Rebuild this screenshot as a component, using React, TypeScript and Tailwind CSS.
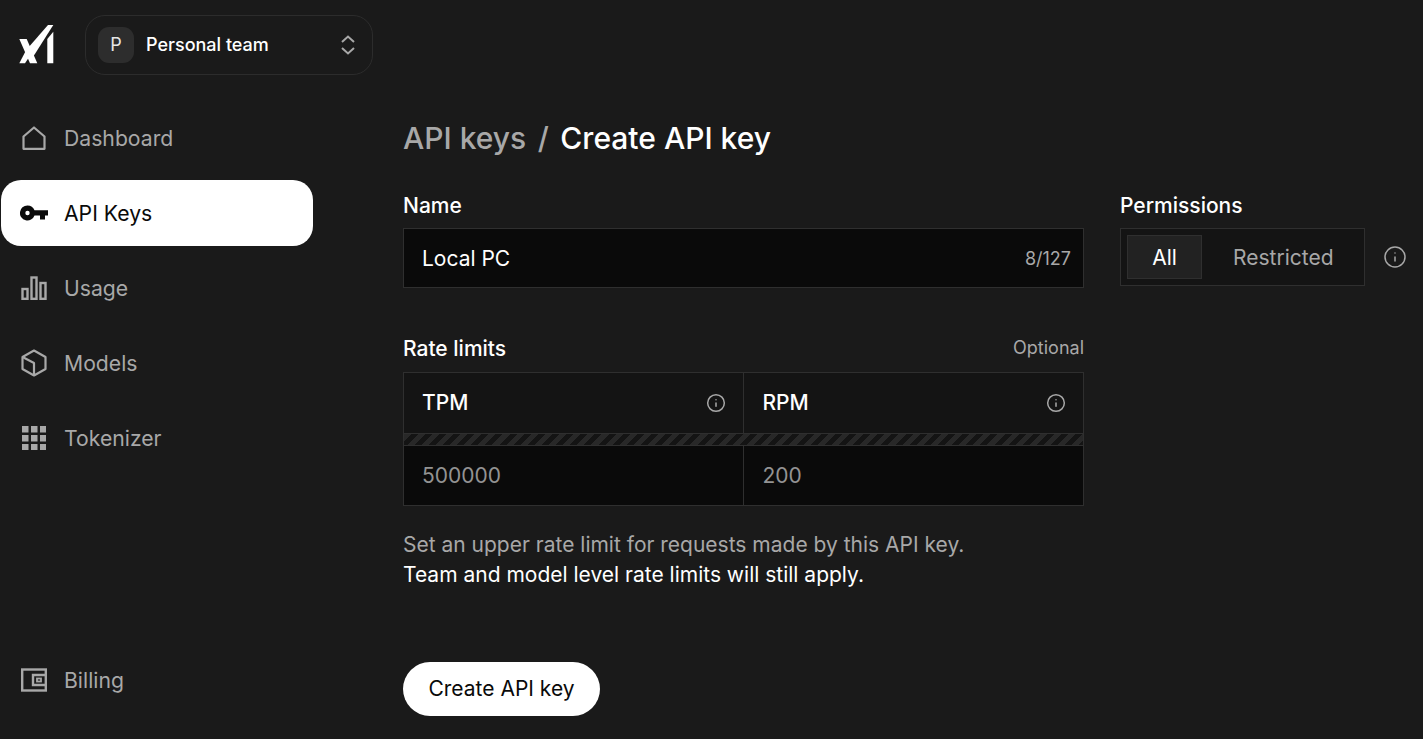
import { Info } from "lucide-react";

const Logo = () => (
  <svg viewBox="0 0 36 40" className="w-[36px] h-[40px]" fill="#fff">
    <path d="M35.300 0 L30 0 L9.500 23.500 L15 32 Z" />
    <path d="M29.300 14 L35.300 6.700 V38.300 H29.300 Z" />
    <path d="M1.300 14 H8.700 L19.300 38.300 H12 Z" />
    <path d="M1.300 38.300 L7.700 26 L11.500 31.500 L7 38.300 Z" />
  </svg>
);

const HomeIcon = () => (
  <svg viewBox="0 0 24 24" className="w-[24px] h-[24px]" fill="none" stroke="currentColor" strokeWidth="2.200">
    <path d="M1.500 10.500 L12 1.500 L22.500 10.500 V22.800 H1.500 Z" strokeLinejoin="round" />
  </svg>
);

const KeyIcon = () => (
  <svg viewBox="0 0 28 16" className="w-[28px] h-[16px]" fill="currentColor">
    <path
      fillRule="evenodd"
      d="M7.500 0.500a7.500 7.500 0 0 1 7 4.800H28v5.200h-3v4h-5v-4h-5.500a7.500 7.500 0 1 1-7-10zm0 5.300a2.200 2.200 0 1 0 0 4.400a2.200 2.200 0 0 0 0-4.400z"
    />
  </svg>
);

const UsageIcon = () => (
  <svg viewBox="0 0 26 24" className="w-[26px] h-[24px]" fill="none" stroke="currentColor" strokeWidth="2.400">
    <rect x="1.500" y="13" width="5" height="9.800" />
    <rect x="10.500" y="1.500" width="5" height="21.300" />
    <rect x="19.500" y="7" width="5" height="15.800" />
  </svg>
);

const ModelsIcon = () => (
  <svg viewBox="0 0 26 28" className="w-[26px] h-[28px]" fill="none" stroke="currentColor" strokeWidth="2.200" strokeLinejoin="round">
    <path d="M13 1.500 L24.500 8 V20 L13 26.500 L1.500 20 V8 Z" />
    <path d="M1.500 8 L13 14 V26.500" />
  </svg>
);

const GridIcon = () => (
  <svg viewBox="0 0 24 24" className="w-[24px] h-[24px]" fill="currentColor">
    {[0, 9, 18].map((y) =>
      [0, 9, 18].map((x) => <rect key={`${x}-${y}`} x={x} y={y} width="6.500" height="6.500" />)
    )}
  </svg>
);

const WalletIcon = () => (
  <svg viewBox="0 0 26 24" className="w-[26px] h-[24px]" fill="none" stroke="currentColor" strokeWidth="2.400">
    <rect x="1.200" y="1.500" width="23.600" height="21" />
    <path d="M25 7 H12 V17 H25" />
    <rect x="16" y="10.500" width="4" height="3" strokeWidth="1.800" />
  </svg>
);

const UpDownIcon = () => (
  <svg viewBox="0 0 14 20" className="w-[14px] h-[20px]" fill="none" stroke="#a8a8a8" strokeWidth="2">
    <path d="M1 7 L7 1.500 L13 7 M1 13 L7 18.500 L13 13" />
  </svg>
);

const navItems = [
  { label: "Dashboard", icon: <HomeIcon /> },
  { label: "API Keys", icon: <KeyIcon />, active: true },
  { label: "Usage", icon: <UsageIcon /> },
  { label: "Models", icon: <ModelsIcon /> },
  { label: "Tokenizer", icon: <GridIcon /> },
];

const NavItem = ({ label, icon, active }: { label: string; icon: React.ReactNode; active?: boolean }) => (
  <div
    className={`flex items-center h-[66px] w-[312px] ml-px rounded-[20px] pl-[19px] ${
      active ? "bg-white text-[#0a0a0a]" : "text-[#a8a8a8]"
    }`}
  >
    <span className="w-[28px] flex justify-center">{icon}</span>
    <span className="ml-[16px] text-[21.200px] leading-none pt-[2px]">{label}</span>
  </div>
);

const App = () => {
  return (
    <div className="flex h-screen overflow-hidden bg-[#1a1a1a] text-white font-['Inter',sans-serif]">
      {/* Sidebar */}
      <aside className="w-[403px] shrink-0 flex flex-col pb-[26px]">
        <div className="flex items-center pt-[15px] pl-[18px]">
          <Logo />
          <div className="ml-[31px] flex items-center w-[288px] h-[60px] rounded-[20px] border border-[#2c2c2c] pl-[12px] pr-[17px]">
            <span className="w-[36px] h-[36px] rounded-[11px] bg-[#2d2d2d] flex items-center justify-center text-[18px] text-[#e5e5e5] pb-[2px]">
              P
            </span>
            <span className="ml-[12px] text-[18px] font-medium flex-1 pb-[2px]">Personal team</span>
            <UpDownIcon />
          </div>
        </div>

        <nav className="mt-[30px] flex flex-col gap-[9px]">
          {navItems.map((item) => (
            <NavItem key={item.label} {...item} />
          ))}
        </nav>

        <div className="mt-auto">
          <NavItem label="Billing" icon={<WalletIcon />} />
        </div>
      </aside>

      {/* Main */}
      <main className="flex-1 pt-[120px]">
        <h1 className="text-[30px] leading-[36px] font-medium flex gap-[11.500px]">
          <span className="text-[#a8a8a8]">API keys</span>
          <span className="text-[#a8a8a8]">/</span>
          <span>Create API key</span>
        </h1>

        <div className="flex mt-[37px] gap-[36px]">
          <div className="w-[681px]">
            <label className="block text-[21px] leading-[26px] font-medium">Name</label>
            <div className="mt-[9px] h-[60px] flex items-center justify-between border border-[#2f2f2f] bg-[#0a0a0a] pl-[18px] pr-[12px]">
              <span className="text-[21px] pt-[2px]">Local PC</span>
              <span className="text-[18px] text-[#a8a8a8]">8/127</span>
            </div>

            <div className="mt-[48px] flex items-end justify-between">
              <label className="text-[21px] leading-[26px] font-medium">Rate limits</label>
              <span className="text-[18px] leading-[24px] pb-[2px] text-[#a8a8a8]">Optional</span>
            </div>

            <div className="mt-[10px] border border-[#2f2f2f]">
              <div className="grid grid-cols-2 h-[60px]">
                <div className="flex items-center justify-between pl-[18px] pr-[17px] border-r border-[#2f2f2f] bg-[#141414]">
                  <span className="text-[21px] font-medium">TPM</span>
                  <Info className="w-[20px] h-[20px] text-[#a8a8a8]" strokeWidth={1.800} />
                </div>
                <div className="flex items-center justify-between pl-[19px] pr-[17px] bg-[#141414]">
                  <span className="text-[21px] font-medium">RPM</span>
                  <Info className="w-[20px] h-[20px] text-[#a8a8a8]" strokeWidth={1.800} />
                </div>
              </div>
              <div className="h-[13px] border-y border-[#2f2f2f] bg-[repeating-linear-gradient(135deg,#282828_0px,#282828_5px,#141414_5px,#141414_10px)]" />
              <div className="grid grid-cols-2 h-[59px] bg-[#0a0a0a] text-[21px] text-[#939393]">
                <div className="flex items-center pl-[18px] border-r border-[#2f2f2f]">500000</div>
                <div className="flex items-center pl-[19px]">200</div>
              </div>
            </div>

            <p className="mt-[24px] text-[21px] leading-[30px] text-[#a8a8a8]">
              Set an upper rate limit for requests made by this API key.
              <br />
              <span className="text-white">Team and model level rate limits will still apply.</span>
            </p>

            <button className="mt-[72px] w-[197px] h-[54px] rounded-full bg-white text-[#0a0a0a] text-[21px]">
              Create API key
            </button>
          </div>

          <div>
            <label className="block text-[21px] leading-[26px] font-medium">Permissions</label>
            <div className="mt-[9px] flex items-center">
              <div className="w-[245px] h-[58px] flex items-center border border-[#2f2f2f] bg-[#141414] pl-[6px]">
                <span className="w-[75px] h-[44px] flex items-center justify-center border border-[#2f2f2f] bg-[#222222] text-[21px] pt-[2px]">
                  All
                </span>
                <span className="ml-[31px] text-[21px] text-[#a8a8a8] pt-[2px]">Restricted</span>
              </div>
              <Info className="ml-[18px] w-[24px] h-[24px] text-[#a8a8a8]" strokeWidth={1.500} />
            </div>
          </div>
        </div>
      </main>
    </div>
  );
};

export default App;
